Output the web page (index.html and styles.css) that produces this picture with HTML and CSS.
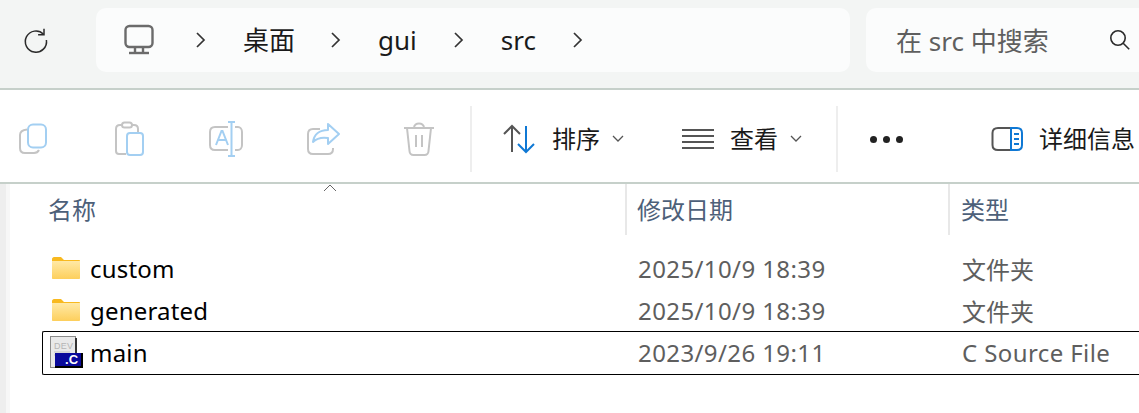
FILE: index.html
```html
<!DOCTYPE html>
<html>
	<head>
		<meta charset="UTF-8">
		<title>src</title>
		<link rel="stylesheet" href="styles.css">
	</head>
	<body>
		<div class="addressRow">
			<div class="refresh">
				<svg width="28" height="28" viewBox="0 0 28 28" fill="none" stroke="#2b2b2b" stroke-width="1.5"><path d="M21.5 8.2A10.6 10.6 0 1 0 24.4 14"/><path d="M22 2.8v5.9h-5.9"/></svg>
			</div>
			<div class="address">
				<svg class="monitor" width="32" height="32" viewBox="0 0 32 32" fill="none" stroke="#6b6b6b" stroke-width="2.4"><rect x="2.5" y="2" width="27" height="21" rx="4"/><path d="M12 23v5M20 23v5"/><path d="M6 29h20"/></svg>
				<svg class="crumbArrow first" width="12" height="18" viewBox="0 0 12 18" fill="none" stroke="#333" stroke-width="1.7"><path d="M2 2l7 7-7 7"/></svg>
				<span class="crumb desk">桌面</span>
				<svg class="crumbArrow" width="12" height="18" viewBox="0 0 12 18" fill="none" stroke="#333" stroke-width="1.7"><path d="M2 2l7 7-7 7"/></svg>
				<span class="crumb">gui</span>
				<svg class="crumbArrow" width="12" height="18" viewBox="0 0 12 18" fill="none" stroke="#333" stroke-width="1.7"><path d="M2 2l7 7-7 7"/></svg>
				<span class="crumb">src</span>
				<svg class="crumbArrow" width="12" height="18" viewBox="0 0 12 18" fill="none" stroke="#333" stroke-width="1.7"><path d="M2 2l7 7-7 7"/></svg>
			</div>
			<div class="search">
				<span class="searchText">在 src 中搜索</span>
				<svg width="24" height="24" viewBox="0 0 24 24" fill="none" stroke="#2b2b2b" stroke-width="1.6"><circle cx="10" cy="10" r="7.2"/><path d="M15.2 15.2l6 6"/></svg>
			</div>
		</div>

		<div class="toolbar">
			<div class="toolIcons">
				<svg width="32" height="32" viewBox="0 0 32 32" fill="none" stroke-width="2"><path d="M9 6.500C4.500 7 2 9 2 12v13c0 3 2 5 5 5h9c2.500 0 4-1 5-3" stroke="#c4c4c4"/><rect x="10" y="1.500" width="18" height="23" rx="5" stroke="#a3cff2"/></svg>
				<svg width="32" height="36" viewBox="0 0 32 36" fill="none" stroke-width="2"><path d="M8 4H6C3 4 2 6 2 8v22c0 2 1 3 3 3h7M24 11V8c0-2-1-4-4-4h-2" stroke="#c4c4c4"/><rect x="8" y="1.500" width="10" height="5" rx="2.500" stroke="#c4c4c4"/><rect x="13" y="12" width="16" height="22" rx="3" stroke="#a3cff2"/></svg>
				<svg width="34" height="36" viewBox="0 0 34 36" fill="none" stroke-width="2"><path d="M19 6H6c-3 0-5 2-5 5v13c0 3 2 5 5 5h13M26 6h3c2 0 4 2 4 5v13c0 3-2 5-4 5h-3" stroke="#c4c4c4"/><path d="M19 1h7M22.500 1v34M19 35h7" stroke="#a3cff2"/><path d="M7 24l5.500-14h1L19 24M9 19h8" stroke="#a3cff2"/></svg>
				<svg width="34" height="34" viewBox="0 0 34 34" fill="none" stroke-width="2"><path d="M13 7H6c-3 0-5 2-5 5v15c0 3 2 5 5 5h15c3 0 5-2 5-5v-1" stroke="#c4c4c4"/><path d="M21 2v6c-9 0-14 5-15 12 4-4 9-5 15-4v6l11-10z" stroke="#a3cff2" stroke-linejoin="round"/></svg>
				<svg width="30" height="34" viewBox="0 0 30 34" fill="none" stroke="#c4c4c4" stroke-width="2"><path d="M0 6h30M10 6c0-6 10-6 10 0M3 6l2.500 23c0 2 1.500 4 4 4h11c2.500 0 4-2 4-4L27 6M12 13v12M18 13v12"/></svg>
			</div>
			<div class="toolDivider"></div>
			<div class="toolBtn sort">
				<svg width="34" height="30" viewBox="0 0 34 30" fill="none" stroke-width="2"><path d="M10 28V2M2 10l8-8 8 8" stroke="#555"/><path d="M24 2v26M16 20l8 8 8-8" stroke="#0f78d4"/></svg>
				<span class="toolText">排序</span>
				<svg class="smallArrow" width="12" height="8" viewBox="0 0 12 8" fill="none" stroke="#555" stroke-width="1.300"><path d="M1 1l5 5 5-5"/></svg>
			</div>
			<div class="toolBtn view">
				<svg width="32" height="22" viewBox="0 0 32 22" fill="none" stroke="#555" stroke-width="2"><path d="M0 2h32M0 8h32M0 14h32M0 20h32"/></svg>
				<span class="toolText">查看</span>
				<svg class="smallArrow" width="12" height="8" viewBox="0 0 12 8" fill="none" stroke="#555" stroke-width="1.300"><path d="M1 1l5 5 5-5"/></svg>
			</div>
			<div class="toolDivider second"></div>
			<div class="dots"><i></i><i></i><i></i></div>
			<div class="toolBtn details">
				<svg width="32" height="26" viewBox="0 0 32 26" fill="none" stroke-width="2"><path d="M20 2H7C3.500 2 1.500 4 1.500 7v12c0 3 2 5 5.500 5h13" stroke="#555"/><path d="M20 2h6c3 0 5 2 5 5v12c0 3-2 5-5 5h-6z" stroke="#0f78d4"/><path d="M23 8h5M23 13h5M23 18h5" stroke="#0f78d4"/></svg>
				<span class="toolText">详细信息</span>
			</div>
		</div>

		<div class="content">
			<div class="navEdge"></div>
			<div class="list">
				<div class="listHead">
					<div class="headCell nameCol">名称</div>
					<div class="headCell dateCol">修改日期</div>
					<div class="headCell typeCol">类型</div>
					<svg class="sortCaret" width="14" height="8" viewBox="0 0 14 8" fill="none" stroke="#666" stroke-width="1"><path d="M1 7l6-6 6 6"/></svg>
				</div>
				<div class="row">
					<div class="fileName">
						<svg class="folder" width="28" height="22" viewBox="0 0 28 22"><defs><linearGradient id="folderFill" x1="0" y1="0" x2="0" y2="1"><stop offset="0" stop-color="#ffe9a6"/><stop offset="1" stop-color="#fdcf5c"/></linearGradient></defs><path d="M0 2c0-1 1-2 2-2h7l3 3h15c.6 0 1 .4 1 1v3H0z" fill="#f8b91f"/><path d="M0 4h28v17c0 .6-.4 1-1 1H1c-.6 0-1-.4-1-1z" fill="url(#folderFill)"/></svg>
						<span>custom</span>
					</div>
					<div class="cellText wide">2025/10/9 18:39</div>
					<div class="cellText">文件夹</div>
				</div>
				<div class="row">
					<div class="fileName">
						<svg class="folder" width="28" height="22" viewBox="0 0 28 22"><path d="M0 2c0-1 1-2 2-2h7l3 3h15c.6 0 1 .4 1 1v3H0z" fill="#f8b91f"/><path d="M0 4h28v17c0 .6-.4 1-1 1H1c-.6 0-1-.4-1-1z" fill="url(#folderFill)"/></svg>
						<span>generated</span>
					</div>
					<div class="cellText wide">2025/10/9 18:39</div>
					<div class="cellText">文件夹</div>
				</div>
				<div class="row focused">
					<div class="fileName">
						<svg class="cfile" width="33" height="32" viewBox="0 0 33 32"><rect x="0.500" y="0.500" width="25" height="31" fill="#e9e9e9" stroke="#8a8a8a"/><rect x="25" y="2" width="2" height="20" fill="#333"/><text x="4" y="13" class="devText">DEV</text><path d="M4 16h16M4 19h12" stroke="#cfcfcf" stroke-width="1.500"/><rect x="5" y="17" width="28" height="15" fill="#000"/><rect x="5" y="17" width="26" height="13" fill="#0a0a9c"/><text x="15" y="28" class="extText">.C</text></svg>
						<span>main</span>
					</div>
					<div class="cellText wide">2023/9/26 19:11</div>
					<div class="cellText wide">C Source File</div>
				</div>
			</div>
		</div>
	</body>
</html>
```

FILE: styles.css
```css
html,body{
	margin: 0;
	padding: 0;
	height: 413px;
	overflow: hidden;
	background-color: #fff;
}
body{
	font-family: "Noto Sans", "Noto Sans CJK SC", sans-serif;
	font-size: 24px;
	color: #1a1a1a;
}
svg{
	display: block;
	flex: none;
}

.addressRow{
	display: flex;
	align-items: center;
	height: 64px;
	padding: 8px 0 16px;
	background-color: #f3f5f4;
	border-bottom: 2px solid #c6d0ca;
}
.refresh{
	display: flex;
	justify-content: center;
	width: 72px;
	margin-right: 24px;
	flex: none;
}
.address{
	display: flex;
	align-items: center;
	width: 754px;
	height: 64px;
	margin-right: 16px;
	background-color: #fbfcfc;
	border-radius: 10px;
	flex: none;
}
.monitor{
	margin-left: 27px;
}
.crumbArrow{
	margin: 0 36px;
}
.crumbArrow.first{
	margin-left: 40px;
}
.crumb{
	font-size: 26px;
	line-height: 64px;
}
.desk{
	margin: 0 -1px 0 0;
}
.search{
	display: flex;
	align-items: center;
	width: 273px;
	height: 64px;
	box-sizing: border-box;
	background-color: #fbfcfc;
	border-radius: 10px 0 0 10px;
	padding-left: 30px;
	flex: none;
}
.searchText{
	width: 212px;
	flex: none;
	font-size: 26px;
	color: #5f5f5f;
}

.toolbar{
	display: flex;
	align-items: center;
	height: 86px;
	padding-top: 6px;
	background-color: #fff;
	border-bottom: 2px solid #c6d0ca;
	overflow: hidden;
}
.toolIcons{
	display: flex;
	align-items: center;
	justify-content: space-between;
	width: 416px;
	margin-left: 18px;
	margin-right: 36px;
	flex: none;
}
.toolDivider{
	width: 2px;
	height: 66px;
	background-color: #eeeeee;
	flex: none;
}
.toolDivider.second{
	margin-left: 34px;
}
.toolBtn{
	display: flex;
	align-items: center;
	flex: none;
}
.sort{
	margin-left: 30px;
}
.view{
	margin-left: 58px;
}
.toolText{
	margin-left: 16px;
	font-size: 24px;
	line-height: 32px;
}
.smallArrow{
	margin-left: 12px;
}
.dots{
	display: flex;
	gap: 6px;
	margin-left: 32px;
	flex: none;
}
.dots i{
	display: block;
	width: 7px;
	height: 7px;
	border-radius: 50%;
	background-color: #222;
}
.details{
	margin-left: 88px;
}

.content{
	display: flex;
	height: 229px;
}
.navEdge{
	width: 6px;
	border-right: 4px solid #f7f7f7;
	background-color: #eeeeee;
	flex: none;
}
.list{
	flex: 1;
	min-width: 0;
}
.listHead{
	position: relative;
	display: flex;
	height: 51px;
}
.headCell{
	font-size: 24px;
	line-height: 52px;
	color: #4d6079;
	box-sizing: border-box;
	flex: none;
}
.nameCol{
	width: 577px;
	margin-left: 38px;
}
.dateCol{
	width: 323px;
	padding-left: 10px;
	border-left: 2px solid #e8e8e8;
}
.typeCol{
	width: 189px;
	padding-left: 11px;
	border-left: 2px solid #e8e8e8;
}
.sortCaret{
	position: absolute;
	left: 313px;
	top: 0;
}
.row{
	display: grid;
	grid-template-columns: 595px 324px 178px;
	align-items: center;
	height: 42px;
	margin-left: 32px;
	padding-bottom: 2px;
	box-sizing: border-box;
	border: 1px solid transparent;
	border-right: 0;
}
.listHead + .row{
	margin-top: 13px;
}
.row.focused{
	height: 44px;
	border-color: #000;
	border-radius: 2px 0 0 2px;
	margin-top: -1px;
}
.fileName{
	display: flex;
	align-items: center;
	color: #000;
	letter-spacing: .2px;
}
.folder{
	margin-left: 9px;
	margin-right: 10px;
}
.cfile{
	margin-left: 7px;
	margin-right: 7px;
}
.cellText{
	color: #5e5e5e;
}
.wide{
	letter-spacing: .4px;
}
.devText{
	font-family: "Liberation Sans", sans-serif;
	font-size: 9px;
	fill: #b5b5b5;
}
.extText{
	font-family: "Liberation Sans", sans-serif;
	font-size: 13px;
	font-weight: bold;
	fill: #fff;
}
```
